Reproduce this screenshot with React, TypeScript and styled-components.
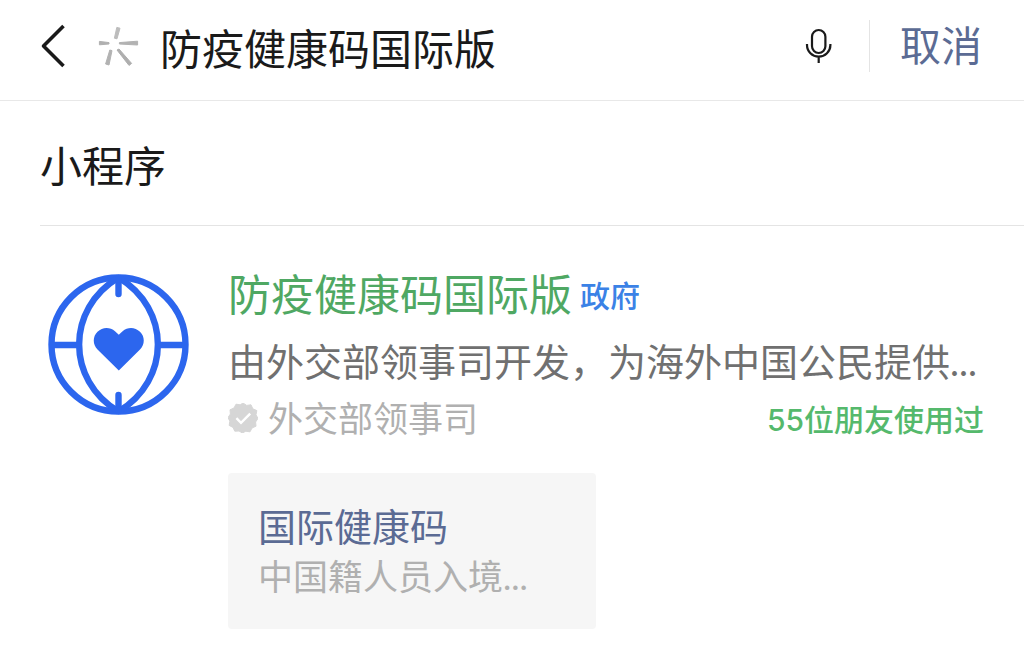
import React from "react";
import styled, { createGlobalStyle } from "styled-components";

const GlobalStyle = createGlobalStyle`
  *, *::before, *::after { box-sizing: border-box; }
  body {
    margin: 0;
    background: #fff;
    color: #1a1a1a;
    font-family: Lato, "Noto Sans CJK SC", sans-serif;
  }
  button, input { font: inherit; color: inherit; border: 0; background: none; padding: 0; margin: 0; }
  button { cursor: pointer; }
  svg { display: block; flex: none; }
  h1, h2, p { margin: 0; font-weight: 400; }
`;

const SearchBar = styled.header`
  display: flex;
  align-items: center;
  padding: 14px 42px 22px 40px;
  border-bottom: 1px solid #e8e8e8;
`;

const IconButton = styled.button`
  flex: none;
`;

const Spinner = styled.svg`
  margin: 0 20px 0 32px;
`;

const SearchInput = styled.input`
  flex: 1;
  min-width: 0;
  height: 64px;
  font-size: 42px;
  outline: none;
`;

const CancelButton = styled.button`
  flex: none;
  margin-left: 36px;
  padding: 2px 0 2px 30px;
  border-left: 1px solid #e4e4e4;
  color: #5b6b94;
  font-size: 41px;
  line-height: 48px;
`;

const Section = styled.section`
  padding-left: 40px;
`;

const SectionTitle = styled.h1`
  padding: 35px 0 29px;
  border-bottom: 1px solid #e4e4e4;
  font-size: 42px;
  line-height: 60px;
`;

const Result = styled.article`
  display: flex;
  gap: 38px;
  padding: 39px 40px 24px 8px;
`;

const Logo = styled.svg`
  margin-top: 8px;
`;

const Details = styled.div`
  flex: 1;
  min-width: 0;
`;

const NameRow = styled.div`
  display: flex;
  align-items: center;
  gap: 8px;
`;

const NameLink = styled.a`
  color: #4fa863;
  font-size: 43px;
  line-height: 60px;
  text-decoration: none;
`;

const Tag = styled.span`
  color: #3b82e6;
  font-size: 30px;
  font-weight: 500;
  line-height: 58px;
`;

const Description = styled.p`
  margin-top: 6px;
  color: #707070;
  font-size: 38px;
  line-height: 60px;
  white-space: nowrap;
`;

const MetaRow = styled.div`
  display: flex;
  align-items: center;
  justify-content: space-between;
  line-height: 54px;
`;

const Publisher = styled.span`
  display: flex;
  align-items: center;
  gap: 10px;
  color: #b0b0b0;
  font-size: 35px;
`;

const Friends = styled.span`
  padding-top: 4px;
  color: #55b96c;
  font-family: Inter, "Noto Sans CJK SC", sans-serif;
  font-size: 30px;
  font-weight: 500;
  line-height: 48px;
`;

const ServiceCard = styled.a`
  display: block;
  width: 368px;
  max-width: 100%;
  margin-top: 28px;
  padding: 28px 30px;
  border-radius: 4px;
  background: #f6f6f6;
  text-decoration: none;
`;

const ServiceName = styled.h2`
  color: #5b6b94;
  font-size: 38px;
  line-height: 50px;
`;

const ServiceNote = styled.p`
  color: #b0b0b0;
  font-size: 35px;
  line-height: 50px;
`;

export default function App() {
  return (
    <>
      <GlobalStyle />
      <SearchBar>
        <IconButton type="button" aria-label="返回">
          <svg width="26" height="44" viewBox="0 0 26 44" fill="none" stroke="#1a1a1a" strokeWidth="3.6">
            <path d="M23.5 2 L3.5 22 L23.5 42" strokeLinejoin="round" />
          </svg>
        </IconButton>
        <Spinner width="42" height="44" viewBox="0 0 42 44" aria-hidden="true">
          <g strokeWidth="1" strokeLinejoin="round">
            <path d="M18.8 3.4 L22 4.2 L19 14.8 L16.4 14.2 Z" fill="#bcbcbc" stroke="#bcbcbc" />
            <path d="M1.4 17.4 L11 18.6 V20 L1.4 20.8 Z" fill="#b0b0b0" stroke="#b0b0b0" />
            <path d="M39.6 17.2 V21 L21.4 20 V18.6 Z" fill="#b2b2b2" stroke="#b2b2b2" />
            <path d="M11.8 26 L14 26.6 L11 41 L7.6 40 Z" fill="#b2b2b2" stroke="#b2b2b2" />
            <path d="M19 26 L21 25 L33.6 39.4 L31 41.4 Z" fill="#aeaeae" stroke="#aeaeae" />
          </g>
        </Spinner>
        <SearchInput type="text" aria-label="搜索" defaultValue="防疫健康码国际版" />
        <IconButton type="button" aria-label="语音输入">
          <svg width="28" height="38" viewBox="0 0 28 38" fill="none" stroke="#1a1a1a" strokeWidth="2.2">
            <rect x="7" y="3" width="13.4" height="23" rx="6.7" />
            <path d="M2 17 v1 a11.7 11.7 0 0 0 23.4 0 v-1 M13.7 29.7 V36" />
          </svg>
        </IconButton>
        <CancelButton type="button">取消</CancelButton>
      </SearchBar>

      <Section>
        <SectionTitle>小程序</SectionTitle>
        <Result>
          <Logo width="142" height="142" viewBox="0 0 142 142" fill="none" stroke="#2c66ee" strokeWidth="6.4" aria-hidden="true">
            <circle cx="70.5" cy="71.5" r="67" />
            <path d="M70.5 4.5 C18 36 18 107 70.5 138.5 M70.5 4.5 C123 36 123 107 70.5 138.5" />
            <path d="M4 72 H31 M110 72 H137" />
            <path d="M70.5 5 V21 M70.5 138 V122" strokeLinecap="round" />
            <path
              d="M70.8 97.5 L49.5 76.5 C44.5 71.5 44.5 63.5 49.5 58.7 C54.5 53.7 62 53.7 67 58.2 L70.8 61.8 L74.6 58.2 C79.6 53.7 87 53.7 92 58.7 C97 63.5 97 71.5 92 76.5 Z"
              fill="#2c66ee"
              stroke="none"
            />
          </Logo>
          <Details>
            <NameRow>
              <NameLink href="#app">防疫健康码国际版</NameLink>
              <Tag>政府</Tag>
            </NameRow>
            <Description>由外交部领事司开发，为海外中国公民提供...</Description>
            <MetaRow>
              <Publisher>
                <svg width="30" height="30" viewBox="0 0 30 30" aria-hidden="true">
                  <path
                    d="M15 0 L18.7 2.4 L23 1.8 L24.8 5.8 L28.8 7.6 L28 11.8 L30 15.4 L27.6 19 L28 23.2 L24 25 L22 28.8 L17.8 28.2 L14.4 30 L11 28 L6.8 28.2 L5 24.4 L1.2 22.4 L1.8 18.2 L0 14.6 L2.4 11 L2 6.8 L6 5 L8 1.2 L12.2 1.8 Z"
                    fill="#d6d6d6"
                    stroke="#d6d6d6"
                    strokeLinejoin="round"
                  />
                  <path d="M8.4 15.2 L13 19.8 L22.2 10.6" fill="none" stroke="#fff" strokeWidth="2.4" />
                </svg>
                外交部领事司
              </Publisher>
              <Friends>55位朋友使用过</Friends>
            </MetaRow>
            <ServiceCard href="#service">
              <ServiceName>国际健康码</ServiceName>
              <ServiceNote>中国籍人员入境...</ServiceNote>
            </ServiceCard>
          </Details>
        </Result>
      </Section>
    </>
  );
}
